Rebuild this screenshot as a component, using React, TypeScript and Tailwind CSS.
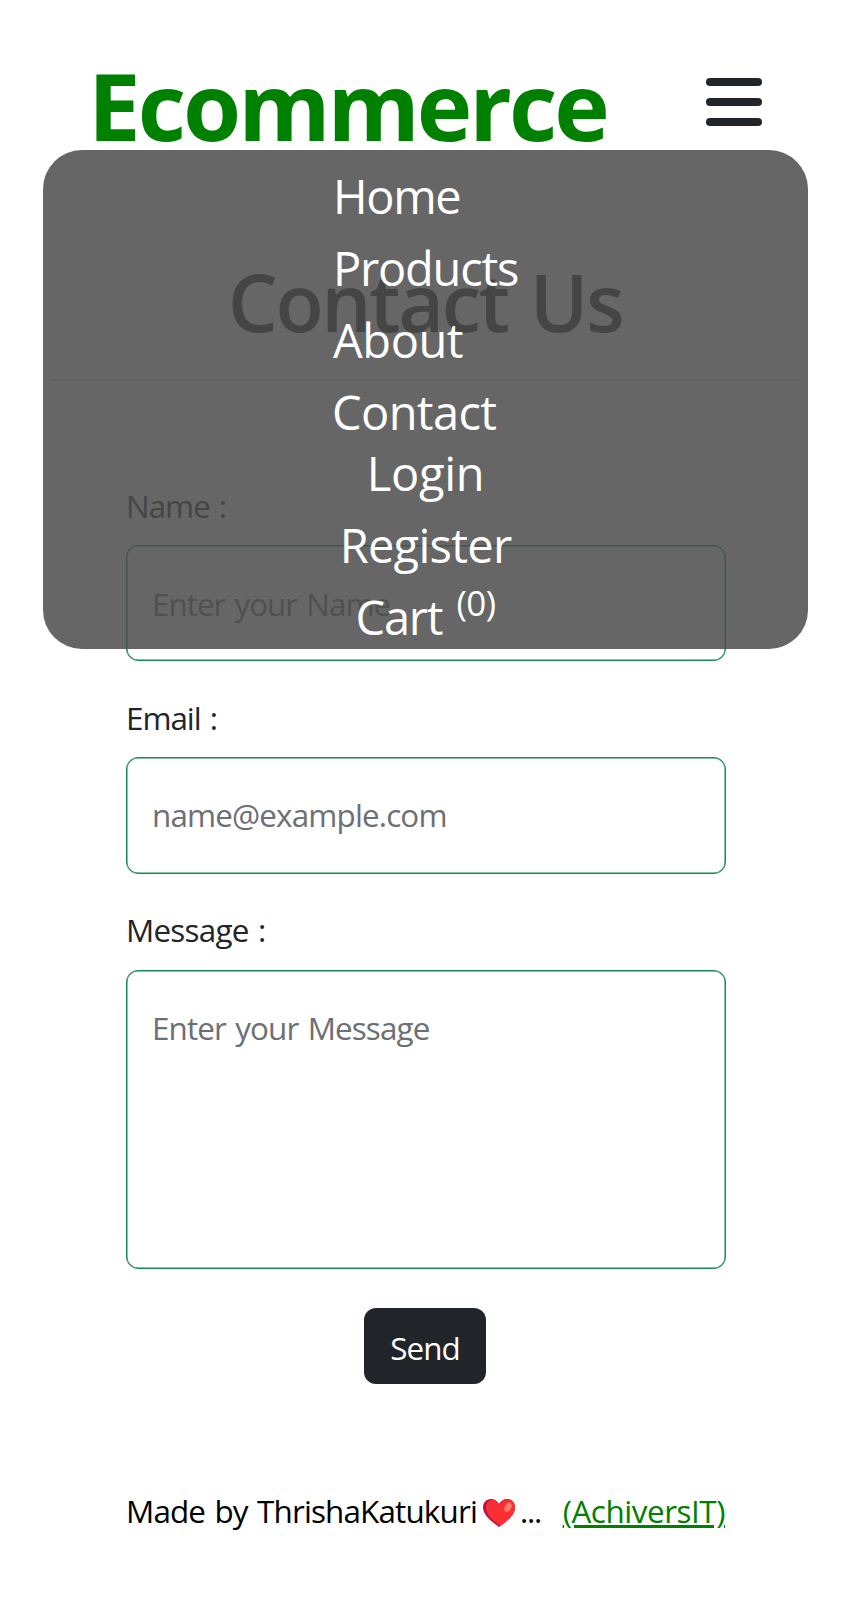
import React from "react";

const mainLinks = [
  { label: "Home", style: "tracking-[-1.4px]" },
  { label: "Products", style: "tracking-[-1.25px]" },
  { label: "About", style: "tracking-[-0.45px]" },
  { label: "Contact", style: "tracking-[-0.65px] -ml-px" },
];

function Heart() {
  return (
    <svg viewBox="0 0 32 29" className="ml-[6px] mt-[5px] h-[29px] w-[32px] shrink-0">
      <path d="M16 28C11 24 0 17 0 8.500C0 3.500 3.500 0 8 0C11.500 0 14.500 2 16 5C17.500 2 20.500 0 24 0C28.500 0 32 3.500 32 8.500C32 17 21 24 16 28Z" fill="#ca0b4a" />
      <path d="M17.500 27C12 22.500 3 17 3 8.500C3 4 5.500 1 9 1C12.500 1 15.500 3.500 16.500 6C18 3 20.500 0.500 24 0.500C28.500 0.500 32 4 32 8.500C32 17 22.500 23 17.500 27Z" fill="#f92f34" />
      <ellipse cx="25" cy="8.300" rx="3.200" ry="5" transform="rotate(30 25 8.300)" fill="#ff7a68" />
    </svg>
  );
}

function NavMenu() {
  return (
    <nav className="absolute left-[43.300px] top-[150.400px] flex h-[499px] w-[764.600px] flex-col items-center rounded-[39px] bg-[#4b4b4b]/85 pt-[16px] text-[47px] leading-[60px] text-white">
      <ul className="flex w-[185px] flex-col gap-3">
        {mainLinks.map((link) => (
          <li key={link.label} className={link.style}>{link.label}</li>
        ))}
      </ul>
      <ul className="mt-px flex flex-col items-center gap-3">
        <li className="tracking-[-0.3px]">Login</li>
        <li className="tracking-[-0.7px]">Register</li>
        <li className="flex h-[60px] gap-[14px]">
          <span className="tracking-[-1.2px]">Cart</span>
          <span className="text-[35px] leading-[31px] tracking-[-0.45px]">(0)</span>
        </li>
      </ul>
    </nav>
  );
}

export default function App() {
  return (
    <div className="relative flex h-[1602px] w-[850px] flex-col overflow-hidden bg-white font-['Open_Sans','Noto_Sans',sans-serif] text-[31.400px] text-[#212529]">
      <header className="flex h-[150px] items-start justify-between pl-[88px] pr-[88px]">
        <div className="mt-[33px] text-[94px] leading-[144px] font-bold tracking-[-3px] text-[#008000]">Ecommerce</div>
        <button className="mt-[78px] flex flex-col gap-3" aria-label="Menu">
          <span className="h-2 w-14 rounded-full bg-[#212529]" />
          <span className="h-2 w-14 rounded-full bg-[#212529]" />
          <span className="h-2 w-14 rounded-full bg-[#212529]" />
        </button>
      </header>
      <main className="flex flex-col">
        <h1 className="mt-[102px] h-[100px] text-center text-[79px] leading-[100px] font-semibold tracking-[-2.3px] [word-spacing:4px]">Contact Us</h1>
        <hr className="mx-[51px] mt-[27px] h-[2px] border-0 bg-[#d3d3d4]" />
        <form className="mx-[126px] flex flex-col">
          <label className="mt-[101px] h-[47px] leading-[48px] tracking-[-1px] [word-spacing:2px]">Name :</label>
          <input placeholder="Enter your Name" className="mt-4 h-[116px] w-[600px] rounded-xl border border-[#198754] px-[25px] tracking-[-1px] [word-spacing:2px] shadow-[inset_0_0_0_0.500px_#198754] placeholder:text-[#6c6f73]" />
          <label className="mt-[33px] h-[47px] leading-[48px] tracking-[-1.05px] [word-spacing:2px]">Email :</label>
          <input placeholder="name@example.com" className="mt-4 h-[117px] w-[600px] rounded-xl border border-[#198754] px-[25px] pb-[2px] tracking-[-0.84px] shadow-[inset_0_0_0_0.500px_#198754] placeholder:text-[#6c6f73]" />
          <label className="mt-8 h-12 leading-[48px] tracking-[-0.75px] [word-spacing:2px]">Message :</label>
          <textarea placeholder="Enter your Message" className="mt-4 h-[299px] w-[600px] resize-none rounded-xl border border-[#198754] px-[25px] pt-[33px] leading-[48px] tracking-[-0.88px] [word-spacing:2px] shadow-[inset_0_0_0_0.500px_#198754] placeholder:text-[#6c6f73]" />
          <button type="button" className="mt-[39px] h-[76px] w-[122px] self-center rounded-xl bg-[#212529] pt-[4px] tracking-[-0.9px] text-white">Send</button>
        </form>
      </main>
      <footer className="mx-[126px] mt-[103px] flex h-12 items-center text-black leading-[48px]">
        <span className="tracking-[-0.84px] [word-spacing:2px]">Made by ThrishaKatukuri</span>
        <Heart />
        <span className="ml-[5px] tracking-[-1.2px]">...</span>
        <a className="-mr-px ml-auto tracking-[-0.45px] text-[#008000] underline">(AchiversIT)</a>
      </footer>
      <NavMenu />
    </div>
  );
}
